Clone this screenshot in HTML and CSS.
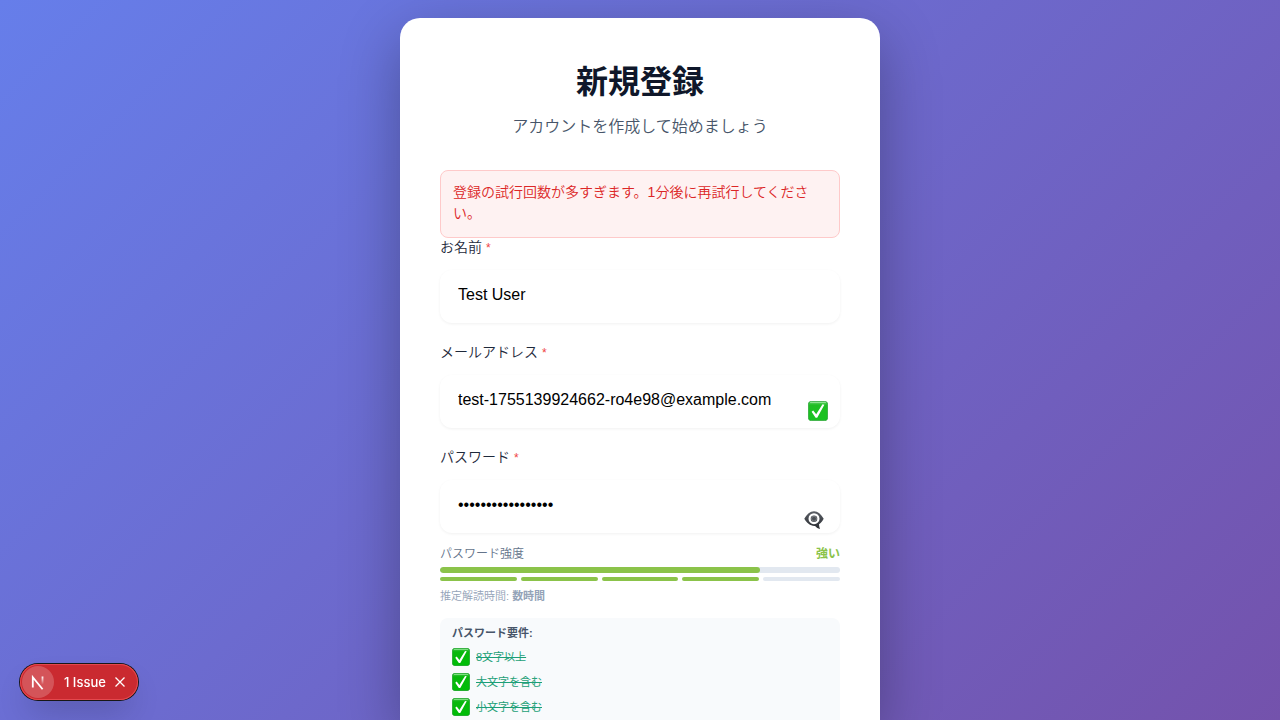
FILE: index.html
```html
<!DOCTYPE html>
<html lang="ja">
<head>
<meta charset="utf-8">
<meta name="viewport" content="width=device-width, initial-scale=1">
<title>新規登録</title>
<link rel="stylesheet" href="styles.css">
</head>
<body>
<svg class="defs" width="0" height="0" aria-hidden="true">
  <defs>
    <linearGradient id="green" x1="0" y1="0" x2="0" y2="1">
      <stop offset="0" stop-color="#4cc653"/>
      <stop offset=".2" stop-color="#08b80c"/>
      <stop offset="1" stop-color="#00bd08"/>
    </linearGradient>
    <linearGradient id="slate" x1="0" y1="0" x2="0" y2="1">
      <stop offset="0" stop-color="#5b5f66"/>
      <stop offset="1" stop-color="#292c31"/>
    </linearGradient>
    <linearGradient id="fade" x1="0" y1="0" x2="0" y2="1">
      <stop offset="0" stop-color="#fff"/>
      <stop offset="1" stop-color="#fff" stop-opacity="0"/>
    </linearGradient>
    <symbol id="check" viewBox="0 0 20 20">
      <rect x=".4" y=".4" width="19.2" height="19.2" rx="2.8" fill="url(#green)" stroke="#149c22" stroke-width=".8"/>
      <path d="M2.5 1.6h15" stroke="#8be58d" stroke-width="1" stroke-linecap="round"/>
      <path d="M3.6 10.7 5.2 9.4 8.2 13.2 14.5 3.3 16.4 3.7 9.2 16.7 7.6 16.7Z" fill="#fff"/>
    </symbol>
  </defs>
</svg>
<main class="page">
  <form class="card">
    <header class="heading">
      <h1 class="title">新規登録</h1>
      <p class="subtitle">アカウントを作成して始めましょう</p>
    </header>
    <div class="alert" role="alert">登録の試行回数が多すぎます。1分後に再試行してください。</div>
    <div class="field">
      <label class="label" for="name">お名前 <span class="required">*</span></label>
      <input class="input" id="name" type="text" value="Test User">
    </div>
    <div class="field">
      <label class="label" for="email">メールアドレス <span class="required">*</span></label>
      <div class="control">
        <input class="input" id="email" type="email" value="test-1755139924662-ro4e98@example.com">
        <svg class="valid" aria-hidden="true"><use href="#check"/></svg>
      </div>
    </div>
    <div class="field password">
      <label class="label" for="password">パスワード <span class="required">*</span></label>
      <div class="control">
        <input class="input" id="password" type="password" value="TestPassword123!@">
        <button class="reveal" type="button" aria-label="パスワードを表示">
          <svg viewBox="0 0 20 20" width="20" height="20" aria-hidden="true">
            <path d="M.3 8.8C2.8 4.4 6.200 1.300 10 1.300s7.200 3.100 9.700 7.500c-1.300 2.300-2.900 4.200-4.700 5.500.1 1.700.4 3.200 1 4.700-2-.5-3.700-1.600-4.900-3.100C6.600 16.300 2.700 13.200.3 8.800Z" fill="url(#slate)"/>
            <circle cx="10" cy="8.700" r="4.400" fill="#41454b" stroke="#fff" stroke-width="2.200"/>
            <circle cx="10" cy="8.700" r="2.500" fill="#4b4f55" stroke="#aeb1b5" stroke-width=".5"/>
          </svg>
        </button>
      </div>
    </div>
    <section class="strength">
      <div class="strength-head"><span>パスワード強度</span><strong class="level">強い</strong></div>
      <div class="meter"><div class="meter-fill" style="width:80%"></div></div>
      <div class="segments"><i class="segment on"></i><i class="segment on"></i><i class="segment on"></i><i class="segment on"></i><i class="segment"></i></div>
      <p class="estimate">推定解読時間: <strong class="duration">数時間</strong></p>
    </section>
    <section class="rules">
      <h2 class="rules-title">パスワード要件:</h2>
      <ul class="rule-list">
        <li class="rule"><svg class="tick" aria-hidden="true"><use href="#check"/></svg><span class="met">8文字以上</span></li>
        <li class="rule"><svg class="tick" aria-hidden="true"><use href="#check"/></svg><span class="met">大文字を含む</span></li>
        <li class="rule"><svg class="tick" aria-hidden="true"><use href="#check"/></svg><span class="met">小文字を含む</span></li>
      </ul>
    </section>
  </form>
</main>
<div class="issues">
  <button class="logo" type="button" aria-label="Open Next.js Dev Tools">
    <svg viewBox="0 0 32 32" width="32" height="32" fill="none" aria-hidden="true">
      <path d="M10.800 21.500V11.200l9.800 12" stroke="#fff" stroke-width="1.800"/>
      <path d="M19.600 10.500h1.800v8h-1.800z" fill="url(#fade)"/>
    </svg>
  </button>
  <button class="issue-text" type="button">1 Issue</button>
  <button class="close" type="button" aria-label="Close">
    <svg viewBox="0 0 12 12" width="12" height="12" aria-hidden="true"><path d="M1.500 1.500l9 9M10.500 1.500l-9 9" stroke="#fff" stroke-width="1.300"/></svg>
  </button>
</div>
</body>
</html>
```
FILE: styles.css
```css
* { box-sizing: border-box; }
body {
  margin: 0;
  font-family: "Liberation Sans", "Noto Sans CJK JP", sans-serif;
  background: #6e66c6;
}
h1, h2, p, ul { margin: 0; padding: 0; }
button { border: 0; padding: 0; background: none; color: inherit; cursor: pointer; }
.defs { position: absolute; }
.page {
  min-height: 100vh;
  padding: 18px 20px 0;
  display: flex;
  justify-content: center;
  background: linear-gradient(135deg, #667eea 0%, #764ba2 100%) 0 0 / 100% 1040px;
}
.card {
  display: flex;
  flex-direction: column;
  width: 100%;
  max-width: 480px;
  padding: 40px 40px 0;
  background: #fff;
  border-radius: 20px 20px 0 0;
  box-shadow: 0 20px 60px rgba(0, 0, 0, .3);
}
.heading { text-align: center; margin-bottom: 31px; }
.title { font-size: 32px; line-height: 48px; font-weight: 700; color: #0f172a; margin-bottom: 9px; }
.subtitle { font-size: 16px; line-height: 24px; font-weight: 350; color: #475569; }
.alert {
  padding: 11px 12px 13px;
  border: 1px solid #fecaca;
  border-radius: 8px;
  background: #fef2f2;
  color: #dc2626;
  font-size: 14px;
  font-weight: 350;
  line-height: 21px;
}
.field { display: flex; flex-direction: column; gap: 14px; margin-bottom: 20px; }
.password { margin-bottom: 12px; }
.label { font-size: 14px; line-height: 18px; font-weight: 350; color: #1e293b; }
.required { color: #ef4444; font-size: 12px; line-height: 12px; }
.control { position: relative; display: flex; }
.input {
  width: 100%;
  height: 53px;
  padding: 14px 18px 18px;
  border: 0;
  border-radius: 12px;
  background: #fff;
  box-shadow: 0 1px 3px rgba(0, 0, 0, .06);
  color: #000;
  font: 16px "Liberation Sans", sans-serif;
}
.valid { position: absolute; right: 12px; bottom: 7px; width: 20px; height: 20px; opacity: .9; }
.reveal { position: absolute; right: 16px; bottom: 3px; width: 20px; height: 20px; }
.reveal svg { display: block; }
.strength-head {
  display: flex;
  justify-content: space-between;
  font-size: 12px;
  font-weight: 350;
  line-height: 18px;
  color: #64748b;
  margin-bottom: 4px;
}
.level { color: #8bc34a; }
.meter { height: 6px; border-radius: 3px; background: #e2e8f0; overflow: hidden; margin-bottom: 4px; }
.meter-fill { height: 100%; border-radius: 3px; background: #8bc34a; }
.segments { display: flex; gap: 4px; margin-bottom: 7px; }
.segment { flex: 1; height: 4px; border-radius: 2px; background: #e2e8f0; }
.on { background: #8bc34a; }
.estimate { font-size: 11px; font-weight: 350; line-height: 17px; color: #94a3b8; margin-bottom: 13px; }
.rules { flex: 1; padding: 7px 12px 4px; border-radius: 8px 8px 0 0; background: #f8fafc; }
.rules-title { font-size: 11px; line-height: 17px; color: #475569; margin-bottom: 6px; }
.rule-list { display: flex; flex-direction: column; gap: 7px; list-style: none; }
.rule { display: flex; align-items: center; gap: 6px; font-size: 11px; line-height: 18px; color: #059669; }
.tick { width: 18px; height: 18px; }
.met { text-decoration: line-through; opacity: .9; }
.issues {
  position: fixed;
  left: 20px;
  bottom: 20px;
  display: flex;
  align-items: center;
  height: 36px;
  padding: 2px 12px 2px 2px;
  border-radius: 18px;
  background: #ca2a30;
  box-shadow: 0 0 0 1px #171717, inset 0 0 0 1px #e5484d, 0 16px 32px -8px rgba(0, 0, 0, .24);
  color: #fff;
  font-family: Inter, sans-serif;
}
.logo { width: 32px; height: 32px; border-radius: 50%; background: rgba(255, 255, 255, .2); }
.logo svg { display: block; }
.issue-text { margin-left: 10px; font: 500 13px/18px Inter, sans-serif; }
.close { margin-left: 8px; width: 12px; height: 12px; }
.close svg { display: block; }
```
